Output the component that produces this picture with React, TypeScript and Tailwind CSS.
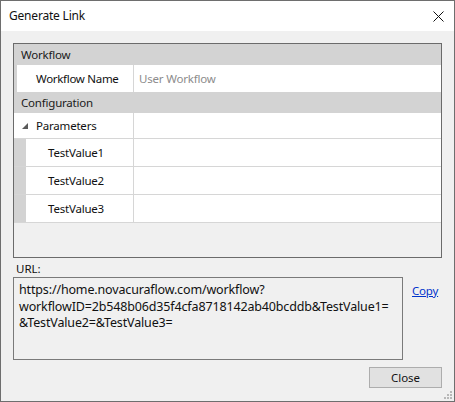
const font = { fontFamily: '"Noto Sans", "Open Sans", sans-serif' }

const Header = ({ label }: { label: string }) => (
  <div className="h-[21px] bg-[#d3d3d3] pl-[7px] flex items-center text-[11.5px] tracking-[-0.2px] text-[#1a1a1a]">{label}</div>
)

const ValueRow = ({ label }: { label: string }) => (
  <div className="flex h-[28px] border-b border-[#d6d6d6]">
    <div className="w-[12px] bg-[#d3d3d3]" />
    <div className="w-[107px] bg-white flex items-center pl-[22px] text-[11.5px] tracking-[-0.2px]">{label}</div>
    <div className="w-px bg-[#d6d6d6]" />
    <div className="flex-1 bg-white" />
  </div>
)

export default function App() {
  return (
    <div style={font} className="relative w-[455px] h-[402px] bg-[#f0f0f0] border border-[#6e6e6e] text-[#111] overflow-hidden">
      <div className="h-[30px] bg-white flex items-center justify-between pl-[8px] pr-[10px] text-[12px] tracking-[-0.2px]">
        <span>Generate Link</span>
        <svg width="11" height="11" viewBox="0 0 11 11" className="mt-[1px]">
          <path d="M0.5 0.5 L10.5 10.5 M10.5 0.5 L0.5 10.5" stroke="#111" strokeWidth="1" />
        </svg>
      </div>

      <div className="px-[12px] pt-[12px]">
        <div className="h-[215px] border border-[#6b6b6b] bg-[#f0f0f0] flex flex-col">
          <Header label="Workflow" />
          <div className="flex h-[27px]">
            <div className="w-[3px] bg-[#d3d3d3]" />
            <div className="w-[116px] bg-white flex items-center pl-[19px] text-[11.5px] tracking-[-0.3px]">Workflow Name</div>
            <div className="w-px bg-[#d6d6d6]" />
            <div className="flex-1 bg-white flex items-center pl-[5px] text-[11.5px] tracking-[-0.2px] text-[#8c8c8c]">User Workflow</div>
          </div>
          <Header label="Configuration" />
          <div className="flex h-[26px] border-b border-[#d6d6d6]">
            <div className="w-[119px] bg-white flex items-center pl-[8px] text-[11.5px] tracking-[-0.2px]">
              <svg width="6" height="6" viewBox="0 0 6 6" className="mr-[8px] mt-[1px]">
                <path d="M6 0 L6 6 L0 6 Z" fill="#5a5a5a" />
              </svg>
              Parameters
            </div>
            <div className="w-px bg-[#d6d6d6]" />
            <div className="flex-1 bg-white" />
          </div>
          <ValueRow label="TestValue1" />
          <ValueRow label="TestValue2" />
          <ValueRow label="TestValue3" />
        </div>

        <div className="mt-[2px] h-[17px] leading-[17px] pl-[3px] text-[11.5px]">URL:</div>

        <div className="flex items-start">
          <div className="w-[390px] h-[83px] border border-[#7a7a7a] pl-[5px] pt-[4px] text-[12.5px] tracking-[-0.15px] leading-[16.7px] whitespace-nowrap text-[#111]">
            https://home.novacuraflow.com/workflow?
            <br />
            workflowID=2b548b06d35f4cfa8718142ab40bcddb&amp;TestValue1=
            <br />
            &amp;TestValue2=&amp;TestValue3=
          </div>
          <a href="#" className="ml-[9px] mt-[5px] text-[11.5px] tracking-[-0.2px] text-[#0033cc] underline">Copy</a>
        </div>

        <div className="flex justify-end mt-[7px]">
          <button className="w-[73px] h-[21px] bg-[#e1e1e1] border border-[#adadad] text-[11.5px] flex items-center justify-center">
            Close
          </button>
        </div>
      </div>

      <svg width="8" height="8" viewBox="0 0 8 8" className="absolute right-[2px] bottom-[2px]">
        <rect x="6" y="0" width="2" height="2" fill="#b8b8b8" />
        <rect x="3" y="3" width="2" height="2" fill="#b8b8b8" />
        <rect x="6" y="3" width="2" height="2" fill="#b8b8b8" />
        <rect x="0" y="6" width="2" height="2" fill="#b8b8b8" />
        <rect x="3" y="6" width="2" height="2" fill="#b8b8b8" />
        <rect x="6" y="6" width="2" height="2" fill="#b8b8b8" />
      </svg>
    </div>
  )
}
